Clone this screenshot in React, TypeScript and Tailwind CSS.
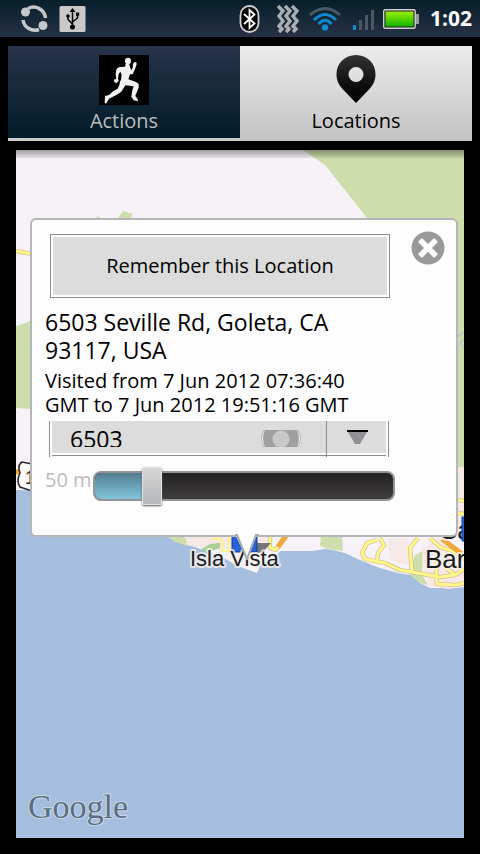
import { useState } from "react";

const ROADS =
  "M16 251L32 254M270 536V548L276 550L285 536M377 540L367 543L362 553L365 559L375 561L385 563L400 570L412 572L440 577L455 575L464 569M380 538L384 545L378 553L377 561M418 538L410 548L412 572M438 560L436 568L437 584L456 585L464 583M430 538L440 547L455 552L464 560M446 568L455 575M458 500L464 501M458 513L464 514";

function StatusBar() {
  return (
    <header className="flex h-[37px] items-center justify-between bg-gradient-to-b from-[#061f2b] to-[#263145] pr-2 pl-5">
      <div className="flex items-center gap-[11px]">
        <svg className="h-7 w-7" viewBox="0 0 28 28" fill="none" aria-label="Syncing">
          <path d="M8 3.500A12 12 0 0 1 25.500 13" stroke="#c4c8ca" strokeWidth="3.500" />
          <path d="M19 24.500A12 12 0 0 1 3 15" stroke="#c4c8ca" strokeWidth="3.500" />
          <circle cx="5.500" cy="7" r="4.500" fill="#c4c8ca" />
          <circle cx="23" cy="20.500" r="4.500" fill="#c4c8ca" />
        </svg>
        <svg className="h-7 w-7" viewBox="0 0 28 28" fill="none" aria-label="USB connected">
          <rect x="0.500" y="1" width="26" height="26" rx="1.500" fill="#c9c9c9" />
          <path d="M13.500 5V22M13.500 19L9 14.500V11M13.500 17L18.500 13V9" stroke="#000" strokeWidth="1.500" />
          <path d="M10.500 7L13.500 3L16.500 7Z" fill="#000" />
          <circle cx="13.500" cy="22" r="2.500" fill="#000" />
          <circle cx="9" cy="11" r="1.800" fill="#000" />
          <rect x="17" y="7.500" width="3.200" height="3.200" fill="#000" />
        </svg>
      </div>
      <div className="flex items-center">
        <svg className="h-[30px] w-[22px]" viewBox="0 0 22 30" fill="none" aria-label="Bluetooth on">
          <rect x="1.500" y="2" width="18" height="26" rx="9" fill="#000" stroke="#d0d0d0" strokeWidth="1.800" />
          <path d="M5 10L15.500 19.500L10.500 24V6L15.500 10.500L5 20" stroke="#fff" strokeWidth="1.800" />
        </svg>
        <svg className="ml-4 h-[30px] w-6" viewBox="0 0 24 30" fill="none" stroke="#a9aeb2" strokeWidth="3.400" aria-label="Vibrate">
          <path d="M1 2L6 7L2 12L6 17L2 22L5 25L2 28" />
          <path d="M8 2L13 7L9 12L13 17L9 22L12 25L9 28" />
          <path d="M15 2L20 7L16 12L20 17L16 22L19 25L16 28" />
        </svg>
        <svg className="ml-2 h-[26px] w-8" viewBox="0 0 32 26" fill="none" aria-label="Wi-Fi">
          <path d="M1 9Q16 -4 31 9" stroke="#4a5a68" strokeWidth="2.800" />
          <path d="M5 14Q16 3 27 14" stroke="#0b8bd0" strokeWidth="3" />
          <path d="M9.500 18Q16 10.500 22.500 18" stroke="#0b8bd0" strokeWidth="3" />
          <circle cx="16" cy="21.500" r="3.200" fill="#0b8bd0" />
        </svg>
        <svg className="ml-3 h-[22px] w-[22px]" viewBox="0 0 22 22" aria-label="Signal strength">
          <rect x="0" y="17" width="3" height="5" fill="#0b8bd0" />
          <rect x="6" y="12" width="3" height="10" fill="#4a5764" />
          <rect x="12" y="7" width="3" height="15" fill="#4a5764" />
          <rect x="18" y="2" width="3" height="20" fill="#4a5764" />
        </svg>
        <svg className="ml-2 h-5 w-9" viewBox="0 0 36 20" aria-label="Battery full">
          <defs>
            <linearGradient id="charge" x1="0" y1="0" x2="0" y2="1">
              <stop offset="0" stopColor="#9cf000" />
              <stop offset="1" stopColor="#10b400" />
            </linearGradient>
          </defs>
          <rect x="32" y="5" width="4" height="10" fill="#9a9a9a" />
          <rect x="0.700" y="0.700" width="31.500" height="18.500" rx="1.500" fill="#222" stroke="#d0d0d0" strokeWidth="1.400" />
          <rect x="2.500" y="2.500" width="28" height="15" fill="url(#charge)" />
        </svg>
        <span className="ml-2 w-[45px] text-right text-[21px] font-bold text-white">1:02</span>
      </div>
    </header>
  );
}

function RunnerIcon() {
  return (
    <svg className="h-[50px] w-[50px] bg-black" viewBox="0 0 150 150" fill="#f2f2f2" aria-hidden="true">
      <ellipse cx="87" cy="18" rx="9" ry="10" />
      <path d="M80 26L78 35L62 36Q54 38 52 44L50 58L52 71L45 74L46 82L53 84L59 77L57 70L59 57L64 50L68 60L66 74Q62 80 61 90L56 101L42 109L30 120L18 123L17 144L21 146L30 131L52 120L67 110L79 91L104 94Q98 108 97 125L104 136L117 139L116 133L109 122L119 98L119 87L111 81L88 73L93 58L101 58L109 40L113 28L112 22L107 21L102 26L101 38L97 46L94 39L91 28Z" />
    </svg>
  );
}

function PinIcon() {
  return (
    <svg className="h-[50px] w-10" viewBox="0 0 40 50" aria-hidden="true">
      <defs>
        <linearGradient id="pin" x1="0" y1="0" x2="0" y2="1">
          <stop offset="0" stopColor="#333" />
          <stop offset="0.700" stopColor="#0a0a0a" />
          <stop offset="1" stopColor="#000" />
        </linearGradient>
      </defs>
      <path
        fill="url(#pin)"
        fillRule="evenodd"
        d="M20 0C9 0 0.500 8.500 0.500 19C0.500 26 3 30 7 34.500L20 48L33 34.500C37 30 39.500 26 39.500 19C39.500 8.500 31 0 20 0ZM20 12A7.500 7.500 0 1 1 20 27A7.500 7.500 0 1 1 20 12Z"
      />
    </svg>
  );
}

function Tabs() {
  return (
    <nav role="tablist" className="mx-2 mt-[9px] grid h-[95px] grid-cols-2">
      <button
        role="tab"
        aria-selected="false"
        className="flex flex-col items-center border-b-[3px] border-[#cbcbcb] bg-gradient-to-b from-[#28344a] to-[#021c29] pt-[9px] text-[20px] leading-8 text-[#bdbdbd]"
      >
        <RunnerIcon />
        Actions
      </button>
      <button
        role="tab"
        aria-selected="true"
        className="flex flex-col items-center bg-gradient-to-b from-[#ececec] to-[#c3c3c3] pt-[9px] text-[20px] leading-8 text-black"
      >
        <PinIcon />
        Locations
      </button>
    </nav>
  );
}

function MapCanvas() {
  return (
    <svg
      className="absolute inset-0 h-full w-full"
      viewBox="16 150 448 688"
      preserveAspectRatio="xMidYMin slice"
      role="img"
      aria-label="Map of Isla Vista and Santa Barbara"
    >
      <defs>
        <linearGradient id="shade" x1="0" y1="0" x2="0" y2="1">
          <stop offset="0" stopColor="#000" stopOpacity="0.350" />
          <stop offset="1" stopColor="#000" stopOpacity="0.080" />
        </linearGradient>
      </defs>
      <rect x="16" y="150" width="448" height="688" fill="#a5bedd" />
      <path
        fill="#f6f2f7"
        d="M16 150H464V587L450 588L430 588L420 583L411 575L398 573L380 568L360 560L345 553L333 550L325 549L312 551L281 551L270 560L262 562L257 573L238 566L220 556L195 547L180 543L168 536L120 510L60 491L16 490Z"
      />
      <path fill="#cddeac" d="M303 150L325 165L367 218V480H458V472H464V150Z" />
      <path fill="#cddeac" d="M118 218L123 211L133 214L130 219ZM95 219L98 216L101 219ZM16 326L31 321V409L16 408Z" />
      <path fill="#cddeac" d="M321 536H342L343 551L328 549L320 546ZM167 536H185L188 546L175 542ZM415 555L423 551L422 574L428 585L420 583L409 574Z" />
      <path fill="#f6e9e5" d="M185 536H275L262 550L235 553L210 549L187 545ZM458 467H464V538H440L451 560L464 568V587L448 589L430 586L423 574L422 550L440 536H458ZM388 538H408L410 566L390 560ZM363 560L376 562L373 566Z" />
      <path fill="#a9cf94" d="M200 550L210 544L220 543V548L208 552Z" />
      <path fill="none" stroke="#b3c9d8" strokeWidth="1.500" d="M458 336L464 333M464 340L460 343L464 348" />
      <g fill="none" strokeLinejoin="round">
        <path stroke="#c9b982" strokeWidth="4.200" d={ROADS} />
        <path stroke="#fff78a" strokeWidth="3" d={ROADS} />
        <path stroke="#fff584" strokeWidth="2" d="M211 538L222 540V551H229V536" />
        <path stroke="#f0a63a" strokeWidth="5" d="M286 536L278 547M442 539L462 554M16 472H22" />
      </g>
      <path fill="#777" d="M255 543H271L262 553H254Z" />
      <path fill="#2563d6" stroke="#123f9b" strokeWidth="1" d="M232 530H257V552H232Z" />
      <path fill="#fff" stroke="#2a2a2a" strokeWidth="1.600" d="M32 464L22 462Q17 465 20 473Q16 481 20 487L32 491Z" />
      <g
        fill="#1c1c1c"
        stroke="#f4f1ef"
        strokeOpacity="0.800"
        strokeWidth="4"
        strokeLinejoin="round"
        paintOrder="stroke"
        fontFamily="Liberation Sans, sans-serif"
      >
        <text x="25" y="484" fontSize="18">1</text>
        <text x="190" y="566" fontSize="22">Isla Vista</text>
        <text x="440" y="539" fontSize="26">Sa</text>
        <text x="425" y="568" fontSize="26">Bar</text>
      </g>
      <path fill="#2563d6" stroke="#123f9b" strokeWidth="1" d="M462 517H468V541H462Z" />
      <text
        x="28"
        y="818"
        fontSize="34"
        fill="#5c6e80"
        stroke="#c9d9eb"
        strokeWidth="2"
        paintOrder="stroke"
        fontFamily="Liberation Serif, serif"
      >
        Google
      </text>
      <rect x="16" y="150" width="448" height="8" fill="url(#shade)" />
    </svg>
  );
}

function AddressPicker() {
  return (
    <div className="relative ml-1 h-9 w-[340px] max-w-full overflow-hidden border-x border-[#8c8c8c] px-[2px]">
      <div className="h-8 overflow-hidden bg-[#dcdcdc]">
        <div className="h-[26px] overflow-hidden">
          <select
            aria-label="Street number"
            className="block h-9 w-full appearance-none bg-transparent pl-[18px] text-[23px] leading-9 text-black outline-none"
          >
            <option>6503</option>
          </select>
        </div>
      </div>
      <div className="mt-[2px] h-px bg-[#8c8c8c]" />
      <svg className="pointer-events-none absolute top-[9px] right-[87px] h-[17px] w-10" viewBox="0 0 40 17" aria-hidden="true">
        <path d="M3 0H37Q42 8 37 17H3Q-2 8 3 0Z" fill="#f2f2f2" stroke="#b5b5b5" />
        <path d="M4 0H36Q40 8 36 17H4Q0 8 4 0Z" fill="#a0a0a0" />
        <circle cx="20" cy="9" r="8.500" fill="#c8c8c8" />
      </svg>
      <span className="pointer-events-none absolute top-0 right-[61px] h-9 w-px bg-[#8c8c8c]" />
      <svg className="pointer-events-none absolute top-[9px] right-5 h-[15px] w-[21px]" viewBox="0 0 21 15" aria-hidden="true">
        <path d="M1 2H20L13 14H8Z" fill="#8f9194" />
        <path d="M0 0H21V2H0Z" fill="#000" />
      </svg>
    </div>
  );
}

function RadiusSlider() {
  const [value, setValue] = useState(17);
  return (
    <div className="mt-[9px] flex h-10 items-center">
      <label htmlFor="radius" className="w-12 shrink-0 pb-3 text-[20px] leading-7 whitespace-nowrap text-[#bbb]">
        50 m
      </label>
      <div className="relative h-[30px] w-[302px] rounded-lg border-2 border-[#949494] bg-gradient-to-b from-[#242121] to-[#403d3e]">
        <div
          className="h-full rounded-l-md bg-gradient-to-b from-[#527f90] to-[#80c4dc]"
          style={{ width: `${value + 2}%` }}
        />
        <input
          id="radius"
          type="range"
          min="0"
          max="100"
          value={value}
          onChange={(event) => setValue(Number(event.target.value))}
          className="absolute -inset-y-2 left-0 w-full appearance-none bg-transparent [&::-webkit-slider-thumb]:h-[38px] [&::-webkit-slider-thumb]:w-5 [&::-webkit-slider-thumb]:appearance-none [&::-webkit-slider-thumb]:rounded-xs [&::-webkit-slider-thumb]:border [&::-webkit-slider-thumb]:border-[#e4e4e4] [&::-webkit-slider-thumb]:bg-gradient-to-b [&::-webkit-slider-thumb]:from-[#d6d6d6] [&::-webkit-slider-thumb]:to-[#b4b6b8] [&::-webkit-slider-thumb]:shadow-[0_1px_2px_#555]"
        />
      </div>
    </div>
  );
}

function LocationPopup() {
  return (
    <section className="absolute top-[68px] right-[6px] left-[14px] h-[319px] rounded-md border-2 border-[#b4b6b8] bg-[#fefdfe] pl-[13px]">
      <div className="flex justify-between pt-[14px] pr-[11px] pl-[5px]">
        <button className="h-16 w-[340px] border border-[#8c8c8c] bg-[#dcdcdc] text-[20px] text-black shadow-[inset_0_0_0_2px_#fff]">
          Remember this Location
        </button>
        <button aria-label="Close" className="-mt-[3px] h-[34px] w-[34px]">
          <svg viewBox="0 0 34 34" aria-hidden="true">
            <circle cx="17" cy="17" r="16.500" fill="#999" />
            <path d="M9 9L25 25M25 9L9 25" stroke="#fff" strokeWidth="5.500" />
          </svg>
        </button>
      </div>
      <h1 className="mt-[10px] w-[300px] text-[23px] leading-7 text-black">6503 Seville Rd, Goleta, CA 93117, USA</h1>
      <p className="mt-[5px] mb-1 w-[330px] text-[20px] leading-6 text-black">
        Visited from 7 Jun 2012 07:36:40 GMT to 7 Jun 2012 19:51:16 GMT
      </p>
      <AddressPicker />
      <RadiusSlider />
      <svg className="absolute top-[314px] left-[203px] h-[26px] w-6" viewBox="0 0 24 26" aria-hidden="true">
        <path d="M0 0L12 25L21 0" fill="#fefdfe" />
        <path d="M0 1H2L12 25L21 1H24" fill="none" stroke="#a8aaac" strokeWidth="2" />
      </svg>
    </section>
  );
}

export default function App() {
  return (
    <div className="flex min-h-screen flex-col bg-black font-['Open_Sans','Noto_Sans',sans-serif]">
      <StatusBar />
      <Tabs />
      <main className="relative mx-4 mt-[9px] mb-4 min-h-[480px] flex-1 overflow-hidden">
        <MapCanvas />
        <LocationPopup />
      </main>
    </div>
  );
}
